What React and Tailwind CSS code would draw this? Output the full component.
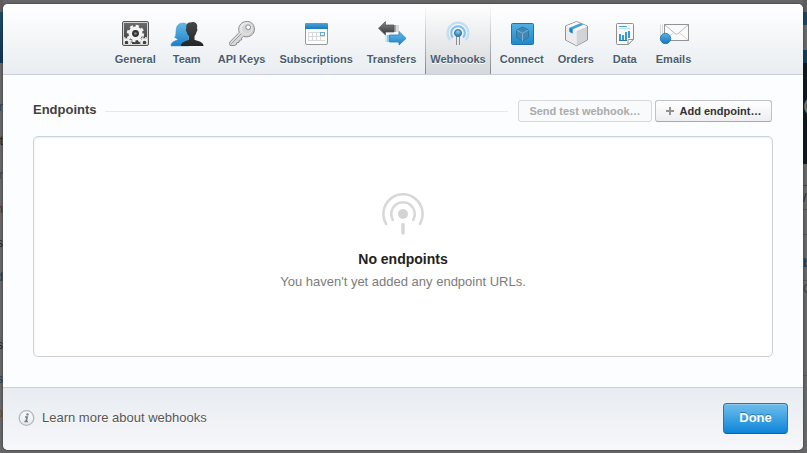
import React from "react";

function GeneralIcon() {
  return (
    <svg width="34" height="30" viewBox="0 0 34 30">
      <defs>
        <linearGradient id="gen" x1="0" y1="0" x2="0" y2="1">
          <stop offset="0" stopColor="#6a6a6a" />
          <stop offset="1" stopColor="#3c3c3c" />
        </linearGradient>
        <clipPath id="genClip"><rect x="6" y="4" width="23" height="21" /></clipPath>
      </defs>
      <rect x="4.5" y="2.5" width="26" height="24" rx="1.5" fill="#d4d4d4" stroke="#555" />
      <rect x="6" y="4" width="23" height="21" fill="url(#gen)" />
      <g clipPath="url(#genClip)">
        <circle cx="17.5" cy="14.5" r="5" fill="none" stroke="#f2f2f2" strokeWidth="4" />
        <circle cx="17.5" cy="14.5" r="7.6" fill="none" stroke="#f2f2f2" strokeWidth="2.2" strokeDasharray="3.2 2.77" />
        <circle cx="17.5" cy="14.5" r="3.4" fill="#333" />
        <circle cx="17.5" cy="14.5" r="1.3" fill="#888" />
        <circle cx="8.5" cy="23.5" r="3" fill="none" stroke="#eee" strokeWidth="2.4" />
        <circle cx="8.5" cy="23.5" r="4.8" fill="none" stroke="#eee" strokeWidth="1.6" strokeDasharray="2.1 1.67" />
        <circle cx="26.5" cy="23.5" r="3" fill="none" stroke="#eee" strokeWidth="2.4" />
        <circle cx="26.5" cy="23.5" r="4.8" fill="none" stroke="#eee" strokeWidth="1.6" strokeDasharray="2.1 1.67" />
      </g>
    </svg>
  );
}

function TeamIcon() {
  return (
    <svg width="34" height="30" viewBox="0 0 34 30">
      <defs>
        <linearGradient id="tm" x1="0" y1="0" x2="0" y2="1">
          <stop offset="0" stopColor="#65b8e8" />
          <stop offset="1" stopColor="#1c80c6" />
        </linearGradient>
        <linearGradient id="tm2" x1="0" y1="0" x2="0" y2="1">
          <stop offset="0" stopColor="#484848" />
          <stop offset="1" stopColor="#252525" />
        </linearGradient>
      </defs>
      <path d="M1 27C1 23.5 3 22.5 8 20.8C8 19.8 6 19.3 4.6 18.4C6.6 16.5 5.5 12 6.6 8.4C7.8 4.6 11 4 12.2 4.2C16 3.6 18.4 6 18.8 10V27Z" fill="url(#tm)" stroke="#3f94cb" strokeWidth=".5" />
      <path d="M11 27C11 23.5 14 22.8 19 20.8V17.2C17.7 16.2 17 14.7 16.8 13C15.7 12.5 15.5 10 16.4 9.6C15.5 5.5 18 3.6 19.8 3.6C24.5 1.8 28.3 4 27 9.6C27.8 10.2 27.3 12.7 26.5 13.1C26.2 14.8 25.4 16.2 24.5 17.2V20.8C30 22.8 33.5 23.3 33.5 27Z" fill="url(#tm2)" />
    </svg>
  );
}

function KeyIcon() {
  return (
    <svg width="34" height="30" viewBox="0 0 34 30">
      <defs>
        <linearGradient id="ky" x1="0" y1="0" x2="1" y2="1">
          <stop offset="0" stopColor="#ffffff" />
          <stop offset="1" stopColor="#b9b9b9" />
        </linearGradient>
      </defs>
      <path d="M14.2 13.5C12.8 9 14.7 5 18 3.4C22 1.4 27 2.6 28.8 6.8C30.6 11.6 28.5 15.2 25.2 17C23 18.1 20.4 18 18.4 17.4L16.6 19.2V21L14.4 21.3L14 23.4L11.8 23.7L11.4 25.7L9.2 26.6L5 26.5L4.6 23.2Z" fill="url(#ky)" stroke="#8b8b8b" strokeWidth="1" />
      <path d="M6.2 24.7L16.3 14.8" stroke="#999" strokeWidth="1" />
      <circle cx="21.8" cy="10" r="5.2" fill="#d5d5d5" stroke="#e9e9e9" />
      <circle cx="23.2" cy="8.2" r="2.4" fill="#f7f9fb" stroke="#8b8b8b" strokeWidth="1" />
    </svg>
  );
}

function CalendarIcon() {
  return (
    <svg width="34" height="30" viewBox="0 0 34 30">
      <defs>
        <linearGradient id="cal" x1="0" y1="0" x2="0" y2="1">
          <stop offset="0" stopColor="#4aa6dc" />
          <stop offset="1" stopColor="#1b78b8" />
        </linearGradient>
      </defs>
      <rect x="6.5" y="4.5" width="22" height="21" rx="1.5" fill="#fdfdfd" stroke="#969696" />
      <path d="M6 10V5Q6 4 7 4H28Q29 4 29 5V10Z" fill="url(#cal)" />
      <path d="M9 13.5H26M9 17.5H26M9 21.5H26M9.5 13V22M13.5 13V22M17.5 13V22M21.5 13V22M25.5 13V18" stroke="#d9d9d9" fill="none" />
      <rect x="21.5" y="13.5" width="4" height="3" fill="#e8f4fb" stroke="#68acd5" />
    </svg>
  );
}

function TransfersIcon() {
  return (
    <svg width="34" height="30" viewBox="0 0 34 30">
      <defs>
        <linearGradient id="tr1" x1="0" y1="0" x2="0" y2="1">
          <stop offset="0" stopColor="#858585" />
          <stop offset="1" stopColor="#373737" />
        </linearGradient>
        <linearGradient id="tr2" x1="0" y1="0" x2="0" y2="1">
          <stop offset="0" stopColor="#6cbcec" />
          <stop offset="1" stopColor="#1c83ca" />
        </linearGradient>
      </defs>
      <path d="M20 6H24V13H20Z" fill="#d9d9d9" />
      <path d="M19 6H21V13H19Z" fill="#aaa" />
      <path d="M3.5 9.3L10.5 2.5V6H19V13H10.5V16Z" fill="url(#tr1)" stroke="#555" strokeWidth=".7" />
      <path d="M10 16H14V23H10Z" fill="#cde8f6" />
      <path d="M12 16H14V23H12Z" fill="#8bc9ec" />
      <path d="M31 19.4L24 12.5V16H14.5V23H24V26Z" fill="url(#tr2)" stroke="#237fb9" strokeWidth=".8" />
    </svg>
  );
}

function WebhooksIcon() {
  return (
    <svg width="34" height="30" viewBox="0 0 34 30">
      <defs>
        <radialGradient id="wh" cx=".5" cy=".3" r=".6">
          <stop offset="0" stopColor="#8ed1f3" />
          <stop offset="1" stopColor="#2384bf" />
        </radialGradient>
      </defs>
      <path d="M9.3 21A10.4 10.4 0 1 1 24.7 21" fill="none" stroke="#bfdff6" strokeWidth="2.2" />
      <path d="M11.9 18.5A6.8 6.8 0 1 1 22.1 18.5" fill="none" stroke="#80c0ee" strokeWidth="2" />
      <path d="M15.5 17V26M18.5 17V26" stroke="#898f94" strokeWidth="1" />
      <circle cx="17" cy="14" r="3.5" fill="url(#wh)" stroke="#3c7392" />
    </svg>
  );
}

function ConnectIcon() {
  return (
    <svg width="34" height="30" viewBox="0 0 34 30">
      <defs>
        <linearGradient id="co" x1="0" y1="0" x2="0" y2="1">
          <stop offset="0" stopColor="#51b1e5" />
          <stop offset="1" stopColor="#1f87cb" />
        </linearGradient>
      </defs>
      <rect x="6.5" y="4.5" width="22" height="21" rx="1" fill="url(#co)" stroke="#1f73ac" />
      <path d="M17.5 8L23.5 11V18.5L17.5 22L11.5 18.5V11Z" fill="#4287b2" stroke="#296e9b" strokeWidth=".8" />
      <path d="M11.5 11L17.5 14.3L23.5 11M17.5 14.3V22" fill="none" stroke="#78b9df" strokeWidth=".9" />
    </svg>
  );
}

function OrdersIcon() {
  return (
    <svg width="34" height="30" viewBox="0 0 34 30">
      <path d="M17.5 2.5L28.5 7V21L17.5 26.7L6.5 21V7Z" fill="#eee" stroke="#929292" />
      <path d="M17.5 12V26.2L28 20.7V7.4Z" fill="#d1d3d6" />
      <path d="M7 7.4L17.5 12V26.2L7 20.7Z" fill="#ececee" />
      <path d="M17.5 3L28 7.2L17.5 11.8L7 7.2Z" fill="#fafafa" />
      <path d="M10.5 8.8L21.3 4.2L24.5 5.7L13.5 10.5V14.6L10.5 12.8Z" fill="#43a1d9" />
      <path d="M10.5 8.8L13.5 10.5V14.6L10.5 12.8Z" fill="#237fb9" />
    </svg>
  );
}

function DataIcon() {
  return (
    <svg width="34" height="30" viewBox="0 0 34 30">
      <path d="M9.5 4.5H24.5Q25.5 4.5 25.5 5.5V20L20 25.5H9.5Q8.5 25.5 8.5 24.5V5.5Q8.5 4.5 9.5 4.5Z" fill="#fafafa" stroke="#8f8f8f" />
      <path d="M20 25.5V21.5Q20 20.5 21 20.5H25.5Z" fill="#fff" stroke="#8f8f8f" />
      <path d="M11 7.5H19" stroke="#4b9fd1" />
      <path d="M11 9.5H22" stroke="#b9dcef" />
      <path d="M11 15H13V22H11ZM14 16H16V22H14ZM17 13H19V22H17ZM20 12H22V19H20Z" fill="#389ad5" />
      <path d="M11 21.5H19" stroke="#2878a9" />
    </svg>
  );
}

function EmailsIcon() {
  return (
    <svg width="34" height="30" viewBox="0 0 34 30">
      <defs>
        <linearGradient id="em" x1="0" y1="0" x2="0" y2="1">
          <stop offset="0" stopColor="#56b2e4" />
          <stop offset="1" stopColor="#1976b8" />
        </linearGradient>
      </defs>
      <path d="M3.5 5.5V20M5.5 5.5V20" stroke="#d5d8da" />
      <rect x="7.5" y="5.5" width="24" height="16" fill="#fafafa" stroke="#939393" />
      <path d="M8 21L16.8 13.5M31 21L22.2 13.5" stroke="#d3d3d3" fill="none" />
      <path d="M8 6L18 14.6Q19.5 15.8 21 14.6L31 6" stroke="#bcbcbc" fill="none" />
      <circle cx="8.5" cy="19.5" r="5.2" fill="url(#em)" stroke="#2271a8" strokeWidth=".8" />
    </svg>
  );
}

function Antenna() {
  return (
    <svg width="44" height="44" viewBox="0 0 44 44" fill="none" strokeLinecap="round" aria-hidden="true">
      <path d="M5.2 32A19.6 19.6 0 1 1 38.8 32" stroke="#d8d8d8" strokeWidth="2.6" />
      <path d="M11.8 28A11.8 11.8 0 1 1 32.2 28" stroke="#d8d8d8" strokeWidth="2.6" />
      <circle cx="22" cy="22" r="5" fill="#d4d4d4" />
      <path d="M22 32.5V41" stroke="#d8d8d8" strokeWidth="3.6" />
    </svg>
  );
}

const tabs = [
  ["General", GeneralIcon],
  ["Team", TeamIcon],
  ["API Keys", KeyIcon],
  ["Subscriptions", CalendarIcon],
  ["Transfers", TransfersIcon],
  ["Webhooks", WebhooksIcon],
  ["Connect", ConnectIcon],
  ["Orders", OrdersIcon],
  ["Data", DataIcon],
  ["Emails", EmailsIcon],
];

const leftRows = [
  ["r", "text-[#27475e]"],
  ["t", "text-[#222]"],
  ["r", "text-[#444450]"],
  ["n", "text-[#5a2921]"],
  ["s", "text-[#222]"],
  ["d", "text-[#1c3a54]"],
  ["", ""],
  ["s", "text-[#222]"],
  ["s", "text-[#18395c]"],
  ["p", "text-[#7a4519]"],
];

function Backdrop() {
  return (
    <div className="absolute inset-0 flex justify-between overflow-hidden bg-[#666668] text-xs" aria-hidden="true">
      <div className="flex w-[3px] flex-col overflow-hidden">
        <div className="h-3 shrink-0 bg-[#5c5c5e]" />
        <div className="h-[51px] shrink-0 bg-linear-to-b from-[#1c4b6a] to-[#0d3351]" />
        <div className="h-[27px] shrink-0" />
        {leftRows.map(([ch, color], i) => (
          <div key={i} className={"flex h-[34px] shrink-0 items-center justify-end " + color}>{ch}</div>
        ))}
      </div>
      <div className="flex w-1 flex-col overflow-hidden">
        <div className="h-3 shrink-0 bg-[#5c5c5e]" />
        <div className="h-[13px] shrink-0 bg-[#174561]" />
        <div className="h-[25px] shrink-0" />
        <div className="h-[13px] shrink-0 bg-[#123d59]" />
        <div className="h-[101px] shrink-0 bg-[#10171f] pt-8 text-2xl leading-6 text-[#777]">C</div>
        <div className="h-[22px] shrink-0 border-b border-[#444]" />
        <div className="h-6 shrink-0 border-b border-[#505050] leading-6 text-[#222]">/2</div>
        <div className="h-[25px] shrink-0 border-b border-[#505050]" />
        <div className="h-[46px] shrink-0 border-b border-[#555] pt-5 font-bold text-[#103c62]">b</div>
        <div className="h-[95px] shrink-0 border-b border-[#555] text-[#444]">C</div>
      </div>
    </div>
  );
}

export default function App() {
  return (
    <div className="relative flex min-h-screen font-['Helvetica_Neue','Liberation_Sans',Arial,sans-serif]">
      <Backdrop />
      <main className="relative mt-1 mr-1 mb-[3px] ml-[3px] flex flex-1 flex-col overflow-hidden rounded-[5px] bg-[#fcfdff] shadow-[0_0_2px_#222]">
        <nav className="flex h-[71px] justify-center gap-1 border-b border-[#c9ced8] bg-linear-to-b from-white to-[#e9edf1]" aria-label="Account settings">
          {tabs.map(([name, Icon]) => (
            <button
              key={name}
              type="button"
              aria-current={name === "Webhooks" ? "page" : undefined}
              className={
                "relative flex flex-col items-center px-[5px] pt-[15px] text-[11px] leading-4 font-bold text-[#4a5d70] [text-shadow:0_1px_0_white] " +
                (name === "Webhooks" ? "bg-linear-to-b from-white to-[#d5d8dc]" : "")
              }
            >
              {name === "Webhooks" && (
                <>
                  <span className="absolute inset-y-0 left-0 w-px bg-linear-to-b from-white to-[#83878b]" />
                  <span className="absolute inset-y-0 right-0 w-px bg-linear-to-b from-white to-[#83878b]" />
                </>
              )}
              <Icon />
              <span className="mt-0.5 whitespace-nowrap">{name}</span>
            </button>
          ))}
        </nav>

        <section className="flex flex-1 flex-col px-[30px] pt-[25px] pb-[30px]">
          <div className="flex h-[22px] items-center pr-px">
            <h1 className="pb-0.5 text-[13px] leading-4 font-bold text-[#414143] [text-shadow:0_1px_0_white]">Endpoints</h1>
            <div className="mr-2.5 ml-2 h-px flex-1 bg-[#e6e9ec]" />
            <button type="button" disabled className="h-[22px] w-[134px] rounded-[3px] border border-[#d5d7db] bg-[#f9fafc] text-[11px] leading-4 font-bold text-[#aaabad]">
              Send test webhook…
            </button>
            <button type="button" className="ml-[3px] flex h-[22px] w-[117px] items-center justify-center gap-1.5 rounded-[3px] border border-[#bfc1c9] border-b-[#a5a8b1] bg-linear-to-b from-white to-[#eeeef2] text-[11px] leading-4 font-bold text-[#333]">
              <svg width="8" height="8" viewBox="0 0 8 8" aria-hidden="true">
                <path d="M4 0V8M0 4H8" stroke="#929292" strokeWidth="2" />
              </svg>
              Add endpoint…
            </button>
          </div>

          <div className="mt-[14px] flex flex-1 flex-col items-center justify-center rounded-[5px] border border-[#cbd2dd] bg-white pb-2.5 shadow-[inset_0_1px_2px_#e9ebef]">
            <Antenna />
            <h2 className="mt-[13px] text-sm leading-5 font-bold text-[#222]">No endpoints</h2>
            <p className="mt-[3px] text-[13px] leading-5 text-[#7c7c7c]">You haven't yet added any endpoint URLs.</p>
          </div>
        </section>

        <footer className="flex h-[63px] items-center justify-between border-t border-[#c9d1d6] bg-linear-to-b from-[#e8ecf0] to-[#f6f7fa] px-[15px] pb-0.5">
          <a href="#webhooks" className="flex items-center gap-[7px] text-[13px] leading-5 text-[#565656] [text-shadow:0_1px_0_white]">
            <svg width="17" height="18" viewBox="0 0 17 18" aria-hidden="true">
              <defs>
                <linearGradient id="inf" x1="0" y1="0" x2="0" y2="1">
                  <stop offset="0" stopColor="#ffffff" />
                  <stop offset="1" stopColor="#e4e7ea" />
                </linearGradient>
              </defs>
              <circle cx="8.5" cy="9" r="7.3" fill="url(#inf)" stroke="#b3b8bc" strokeWidth="1.3" />
              <circle cx="9.5" cy="5.4" r="1.2" fill="#71808d" />
              <path d="M7 8H9.2L8 12.5H10M6.4 12.5H8" fill="none" stroke="#71808d" strokeWidth="1.6" />
            </svg>
            Learn more about webhooks
          </a>
          <button type="button" className="h-[31px] w-[65px] rounded-[4px] border border-[#2876ad] border-b-[#12629b] bg-linear-to-b from-[#70bdea] via-[#3ba3e3] to-[#0784d8] text-[13px] leading-5 font-bold text-white shadow-[inset_0_1px_0_#8acbf0] [text-shadow:0_-1px_0_#2878b0]">
            Done
          </button>
        </footer>
      </main>
    </div>
  );
}
